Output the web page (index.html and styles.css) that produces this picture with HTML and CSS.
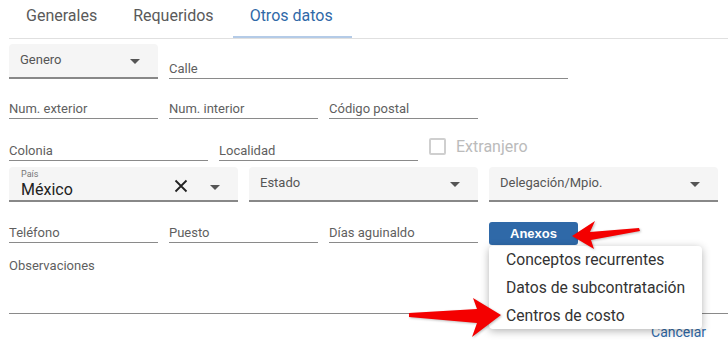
FILE: index.html
```
<!DOCTYPE html>
<html lang="es">
<head>
  <meta charset="UTF-8">
  <meta name="viewport" content="width=device-width, initial-scale=1.0">
  <title>Otros datos</title>
  <link rel="stylesheet" href="styles.css">
</head>
<body>
  <div class="tabs">
    <div class="tab">Generales</div>
    <div class="tab">Requeridos</div>
    <div class="tab active">Otros datos</div>
  </div>

  <div class="form">
    <div class="row row-1">
      <div class="select w150">
        <span class="select-label">Genero</span>
        <span class="caret"></span>
      </div>
      <div class="field w400"><span class="field-label">Calle</span></div>
    </div>

    <div class="row row-2">
      <div class="field w150"><span class="field-label">Num. exterior</span></div>
      <div class="field w150"><span class="field-label">Num. interior</span></div>
      <div class="field w150"><span class="field-label">Código postal</span></div>
    </div>

    <div class="row row-3">
      <div class="field w200"><span class="field-label">Colonia</span></div>
      <div class="field w200"><span class="field-label">Localidad</span></div>
      <label class="check">
        <span class="check-box"></span>
        <span class="check-label">Extranjero</span>
      </label>
    </div>

    <div class="row row-4">
      <div class="select w230 has-value">
        <div class="select-value">
          <span class="select-mini">País</span>
          <span class="select-text">México</span>
        </div>
        <svg class="clear" width="14" height="14" viewBox="0 0 14 14">
          <path d="M1.5 1.5 L12.5 12.5 M12.5 1.5 L1.5 12.5" stroke="#222" stroke-width="1.8" fill="none"/>
        </svg>
        <span class="caret"></span>
      </div>
      <div class="select w230">
        <span class="select-label">Estado</span>
        <span class="caret"></span>
      </div>
      <div class="select w230">
        <span class="select-label">Delegación/Mpio.</span>
        <span class="caret"></span>
      </div>
    </div>

    <div class="row row-5">
      <div class="field w150"><span class="field-label">Teléfono</span></div>
      <div class="field w150"><span class="field-label">Puesto</span></div>
      <div class="field w150"><span class="field-label">Días aguinaldo</span></div>
      <div class="anexos">
        <button class="btn-anexos">Anexos</button>
        <div class="menu">
          <div class="menu-item">Conceptos recurrentes</div>
          <div class="menu-item">Datos de subcontratación</div>
          <div class="menu-item">Centros de costo</div>
        </div>
      </div>
    </div>

    <div class="obs">
      <span class="field-label">Observaciones</span>
    </div>

    <div class="actions">
      <a class="link">Cancelar</a>
    </div>
  </div>

  <!-- flechas de señalamiento -->
  <svg class="arrows" width="728" height="354" viewBox="0 0 728 354">
    <polygon points="572,236 595,221 590,232 639,228 640,231 591,240 594,249" fill="#f40000"/>
    <polygon points="501,315 473,298 477,309 409,313 409,317 477,323 472,337" fill="#f40000"/>
  </svg>
</body>
</html>
```

FILE: styles.css
```
body {
  margin: 0;
  font-family: Roboto, "Liberation Sans", Arial, sans-serif;
  color: #333;
  background: #fff;
  position: relative;
  width: 728px;
  height: 354px;
  overflow: hidden;
}
.tabs {
  display: flex;
  margin-left: 9px;
  border-bottom: 1px solid #e0e0e0;
  height: 38px;
}
.tab {
  padding: 6px 19px 0 17px;
  font-size: 16px;
  line-height: 20px;
  color: #5a5a5a;
  box-sizing: border-box;
  height: 38px;
}
.tab.active {
  color: #2f69a8;
  border-bottom: 2px solid #b4cbe7;
}
.form {
  padding-left: 9px;
}
.row {
  display: flex;
  gap: 11px;
  align-items: flex-end;
}
.row-1 { margin-top: 5px; height: 35px; }
.row-2 { height: 40px; }
.row-3 { height: 42px; }
.row-4 { margin-top: 6px; height: 35px; }
.row-5 { height: 41px; }
.w150 { width: 149px; }
.w200 { width: 199px; }
.w230 { width: 229px; }
.w400 { width: 399px; }
.field {
  border-bottom: 1px solid #8a8a8a;
  padding-bottom: 1px;
  box-sizing: border-box;
}
.field-label {
  font-size: 13px;
  line-height: 16px;
  color: #5f5f5f;
}
.select {
  position: relative;
  height: 35px;
  box-sizing: border-box;
  background: #f5f5f5;
  border-radius: 4px 4px 0 0;
  border-bottom: 2px solid #888;
  display: flex;
  align-items: flex-start;
  padding: 8px 18px 0 11px;
}
.select-label {
  flex: 1;
  font-size: 13px;
  line-height: 16px;
  color: #555;
}
.caret {
  width: 0;
  height: 0;
  margin-top: 7px;
  border-left: 5px solid transparent;
  border-right: 5px solid transparent;
  border-top: 5px solid #555;
}
.select.has-value {
  padding-top: 2px;
  padding-left: 12px;
}
.select-value {
  flex: 1;
  display: flex;
  flex-direction: column;
}
.select-mini {
  font-size: 9px;
  line-height: 11px;
  color: #777;
}
.select-text {
  font-size: 16px;
  line-height: 20px;
  color: #222;
}
.select.has-value .clear {
  margin: 10px 22px 0 0;
}
.select.has-value .caret {
  margin-top: 16px;
}
.check {
  display: flex;
  align-items: center;
  gap: 10px;
  align-self: flex-start;
  margin-top: 18px;
}
.check-box {
  width: 13px;
  height: 13px;
  border: 2px solid #cfcfcf;
  border-radius: 2px;
}
.check-label {
  font-size: 16px;
  color: #bbb;
}
.anexos {
  position: relative;
  margin-bottom: -2px;
}
.btn-anexos {
  width: 89px;
  height: 23px;
  border: none;
  border-radius: 3px;
  background: #2f69a8;
  color: #fff;
  font-family: "Liberation Sans", Arial, sans-serif;
  font-weight: bold;
  font-size: 13px;
  padding: 0;
  display: block;
}
.menu {
  position: absolute;
  top: calc(100% + 1px);
  left: 0;
  width: 213px;
  height: 83px;
  background: #fff;
  border-radius: 4px;
  box-shadow: 0 2px 8px rgba(0,0,0,0.3);
  z-index: 2;
}
.menu-item {
  padding-left: 17px;
  font-size: 15.7px;
  line-height: 28px;
  color: #333;
}
.obs {
  height: 71px;
  padding-top: 12px;
  box-sizing: border-box;
  border-bottom: 1px solid #8a8a8a;
}
.actions {
  display: flex;
  justify-content: flex-end;
  padding-right: 22px;
  margin-top: 8px;
}
.link {
  font-size: 14px;
  line-height: 20px;
  color: #2f69a8;
}
.arrows {
  position: absolute;
  left: 0;
  top: 0;
  pointer-events: none;
  z-index: 3;
  filter: drop-shadow(1px 1px 1px rgba(0,0,0,0.25));
}
```
